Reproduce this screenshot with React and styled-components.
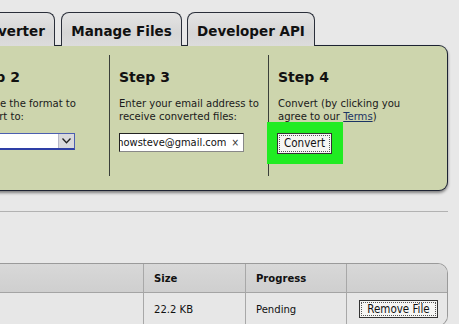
import React from "react";
import styled, { createGlobalStyle } from "styled-components";

const Global = createGlobalStyle`
  html, body { margin: 0; padding: 0; }
  body {
    background: #e8e8e8;
    overflow: hidden;
    width: 459px;
    height: 324px;
    font-family: "DejaVu Sans Condensed", "DejaVu Sans", "Liberation Sans", sans-serif;
    color: #111;
  }
`;

const Page = styled.div`
  margin-left: -41px;
  width: 489px;
  padding-top: 12px;
`;

const TabRow = styled.div`
  display: flex;
  gap: 6px;
  height: 34px;
  margin-bottom: -1px;
  position: relative;
  z-index: 1;
`;

const Tab = styled.div`
  box-sizing: border-box;
  width: ${(p) => p.$w}px;
  margin-left: ${(p) => p.$ml || 0}px;
  height: 34px;
  border: 1px solid #2a2f3a;
  border-bottom: none;
  border-radius: 8px 8px 0 0;
  background: linear-gradient(#e4e4e4, #d6d6d6 60%, #dcdcdc);
  display: flex;
  align-items: center;
  justify-content: center;
  padding-top: 2px;
  font-family: "DejaVu Sans", sans-serif;
  font-weight: bold;
  font-size: 13.5px;
  color: #111;
  white-space: nowrap;
`;

const Panel = styled.div`
  box-sizing: border-box;
  height: 146px;
  background: #cdd5ad;
  border: 1.5px solid #1d2333;
  border-left: none;
  border-radius: 0 9px 9px 0;
  box-shadow: 0 2px 3px rgba(0, 0, 0, 0.45);
  display: flex;
  padding: 9px 0 14px;
`;

const Column = styled.div`
  box-sizing: border-box;
  width: ${(p) => p.$w}px;
  padding: 14px 0 0 ${(p) => p.$pl || 9}px;
  border-right: ${(p) => (p.$divider ? "1px solid #3a3f3a" : "none")};
  display: flex;
  flex-direction: column;
  align-items: flex-start;
`;

const StepTitle = styled.div`
  font-family: "DejaVu Sans", sans-serif;
  font-weight: bold;
  font-size: 14px;
  line-height: 17px;
  color: #111;
`;

const StepText = styled.div`
  margin-top: 11px;
  font-size: 11.2px;
  line-height: 13px;
  color: #1a1a1a;
  white-space: nowrap;
`;

const Link = styled.a`
  color: #1b3464;
  text-decoration: underline;
`;

const Select = styled.div`
  box-sizing: border-box;
  margin-top: 10px;
  width: 106px;
  height: 17px;
  background: #fff;
  border: 1px solid #4c5fb0;
  border-bottom: 2px solid #2e3fa6;
  display: flex;
  justify-content: flex-end;
`;

const SelectArrow = styled.div`
  width: 15px;
  height: 100%;
  background: #d9d9dc;
  border-left: 1px solid #b8b8c8;
  display: flex;
  align-items: center;
  justify-content: center;
`;

const Input = styled.div`
  box-sizing: border-box;
  margin-top: 10px;
  width: 125px;
  height: 19px;
  background: #fff;
  border: 1px solid #222;
  border-right-color: #888;
  border-bottom-color: #888;
  display: flex;
  align-items: center;
  overflow: hidden;
  padding-right: 4px;
`;

const InputText = styled.div`
  flex: 1;
  overflow: hidden;
  display: flex;
  justify-content: flex-end;
  font-size: 11px;
  white-space: nowrap;
  color: #111;
`;

const Clear = styled.span`
  margin-left: 5px;
  font-size: 10px;
  color: #333;
`;

const Highlight = styled.div`
  margin-top: -1px;
  margin-left: -11px;
  padding: 10px 11px 10px 10px;
  background: #20ec22;
`;

const Button = styled.button`
  box-sizing: border-box;
  width: ${(p) => p.$w}px;
  height: ${(p) => p.$h}px;
  background: #f6f6f4;
  border: 1px solid #333;
  outline: 1px dotted #555;
  outline-offset: -3px;
  padding: 0;
  font-family: "DejaVu Sans Condensed", "DejaVu Sans", sans-serif;
  font-size: 11.5px;
  color: #111;
`;

const Rule = styled.div`
  margin-top: 20px;
  height: 1px;
  background: #b2b2b2;
`;

const Table = styled.div`
  margin-top: 51px;
  display: grid;
  grid-template-columns: 185px 102px 101px 1fr;
  border: 1px solid #9a9a9a;
  border-left: none;
  border-radius: 0 10px 10px 0;
  overflow: hidden;
`;

const Cell = styled.div`
  box-sizing: border-box;
  height: ${(p) => (p.$head ? 29 : 32)}px;
  display: flex;
  align-items: center;
  padding-left: ${(p) => p.$pl || 10}px;
  background: ${(p) => (p.$head ? "linear-gradient(#d8d8d8, #cfcfcf)" : "#e7e7e7")};
  border-right: ${(p) => (p.$last ? "none" : "1px solid #a8a8a8")};
  border-bottom: ${(p) => (p.$head ? "1px solid #a4a4a4" : "none")};
  font-size: 11.2px;
  font-weight: ${(p) => (p.$head ? "bold" : "normal")};
  color: #111;
`;

export default function App() {
  return (
    <>
      <Global />
      <Page>
        <TabRow>
          <Tab $w={96}>Converter</Tab>
          <Tab $w={121}>Manage Files</Tab>
          <Tab $w={128} $ml={-1}>Developer API</Tab>
        </TabRow>
        <Panel>
          <Column $w={151} $pl={10} $divider>
            <StepTitle>Step 2</StepTitle>
            <StepText>
              Choose the format to
              <br />
              convert to:
            </StepText>
            <Select>
              <SelectArrow>
                <svg width="9" height="6" viewBox="0 0 9 6">
                  <path d="M0.5 0.5 L4.5 4.8 L8.5 0.5" fill="none" stroke="#222" strokeWidth="1.3" />
                </svg>
              </SelectArrow>
            </Select>
          </Column>
          <Column $w={159} $divider>
            <StepTitle>Step 3</StepTitle>
            <StepText>
              Enter your email address to
              <br />
              receive converted files:
            </StepText>
            <Input>
              <InputText>wikihowsteve@gmail.com</InputText>
              <Clear>×</Clear>
            </Input>
          </Column>
          <Column $w={178}>
            <StepTitle>Step 4</StepTitle>
            <StepText>
              Convert (by clicking you
              <br />
              agree to our <Link>Terms</Link>)
            </StepText>
            <Highlight>
              <Button $w={55} $h={21}>Convert</Button>
            </Highlight>
          </Column>
        </Panel>
        <Rule />
        <Table>
          <Cell $head />
          <Cell $head>Size</Cell>
          <Cell $head>Progress</Cell>
          <Cell $head $last />
          <Cell />
          <Cell>22.2 KB</Cell>
          <Cell>Pending</Cell>
          <Cell $last $pl={12}>
            <Button $w={79} $h={18}>Remove File</Button>
          </Cell>
        </Table>
      </Page>
    </>
  );
}
